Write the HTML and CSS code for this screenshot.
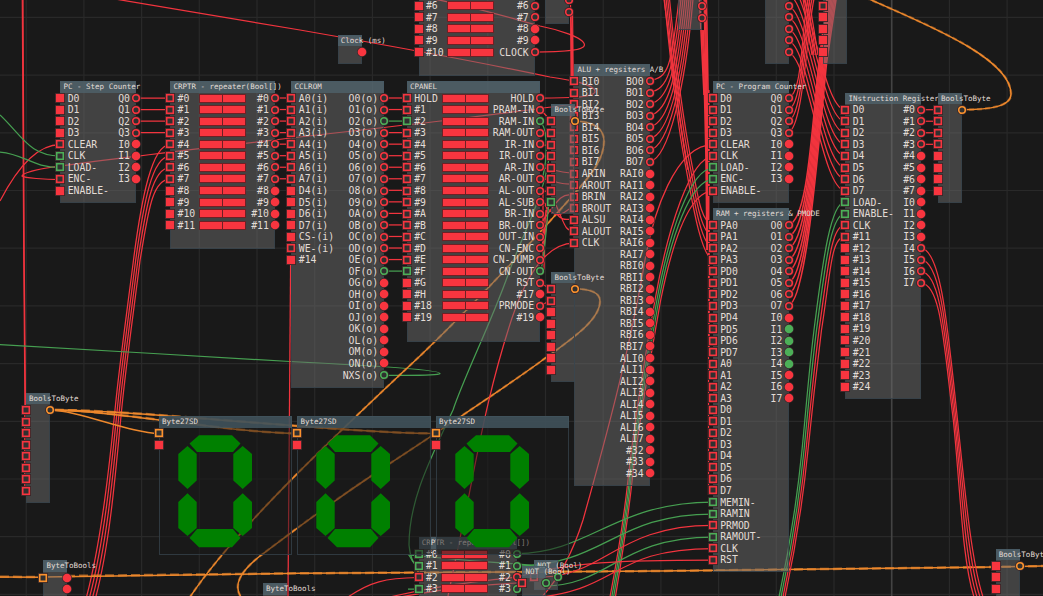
FILE: index.html
```html
<!DOCTYPE html>
<html lang="en">
<head>
<meta charset="utf-8">
<title>Node graph</title>
<link rel="stylesheet" href="styles.css">
</head>
<body>
<main class="canvas" id="canvas">
  <svg class="wires" id="wires" width="1043" height="596"></svg>
</main>
<script src="graph.js"></script>
</body>
</html>
```
FILE: styles.css
```css
*, *::before { box-sizing: border-box; }
body { margin: 0; background: #191919; }
.canvas {
  position: relative;
  width: 1043px;
  height: 596px;
  overflow: hidden;
  background: #191919;
  font-family: "DejaVu Sans Mono", monospace;
  color: #e2dcd6;
}
.wires { position: absolute; left: 0; top: 0; fill: none; }
.wires path { fill: none; stroke-width: 1.25; }
.grid { stroke: #292929; stroke-width: 1.2; }
.grid-major { stroke: #434343; stroke-width: 1.6; }
.wires .red { stroke: #f2343e; }
.wires .green { stroke: #469f51; }
.wires .orange { stroke: #ee882c; stroke-width: 1.5; }
.wires .pulse { stroke: #ee882c; stroke-width: 2.5; stroke-dasharray: 9 4; opacity: .65; }
.wires .glow { stroke: #ee882c; stroke-width: 2.6; stroke-dasharray: 5 3; opacity: .4; }
.wires .thin { stroke-width: .8; }
.wires .bold { stroke-width: 1.6; }
.node {
  position: absolute;
  background: rgba(107, 107, 107, .5);
  border: 1px solid rgba(52, 65, 74, .8);
}
.node-title {
  height: 11.5px;
  margin: -1px -1px 0;
  padding-left: 3.2px;
  font-size: 7.5px;
  line-height: 12.4px;
  white-space: nowrap;
  background: rgba(82, 105, 115, .65);
}
.row {
  display: flex;
  align-items: center;
  height: 11.54px;
  margin: 0 -6px;
  font-size: 9.8px;
  line-height: 11px;
  white-space: nowrap;
}
.label-in { margin-left: 2.4px; }
.label-out { margin-left: auto; margin-right: 1.3px; }
.port { flex: none; display: block; width: 10px; height: 10px; }
.port .rim { fill: #38282a; }
.port .mark { fill: var(--tone); }
.port .ring { fill: #303030; stroke: var(--tone); stroke-width: 1.6; }
.port.red { --tone: #f8353f; }
.port.green { --tone: #4caf58; }
.port.orange { --tone: #fb922d; }
.switch { display: flex; flex: none; width: 47px; height: 9px; border: 1px solid #6e2025; background: #6e2025; gap: 1px; }
.switch i { flex: 1; background: #f8353f; }
.display { background: rgba(25, 25, 25, .52); }
.display .node-title { background: rgba(68, 88, 98, .82); }
.segments { position: absolute; left: -1px; top: -1px; fill: #008000; }
```
FILE: graph.js
```
const canvas = document.getElementById('canvas');
const wires = document.getElementById('wires');
const STEP = 11.54;
const parts = [];

// Grid
for (let x = 891.7 - 15 * 57.7; x < 1043; x += 57.7)
  parts.push(`<line class="grid" x1="${x}" x2="${x}" y1="0" y2="596"/>`);
for (let y = 17.4; y < 596; y += 57.7)
  parts.push(`<line class="grid" x1="0" x2="1043" y1="${y}" y2="${y}"/>`);
parts.push('<line class="grid-major" x1="891.7" x2="891.7" y1="0" y2="596"/>');

const path = (cls, d) => parts.push(`<path class="${cls}" d="${d}"/>`);
const link = (cls, x1, y1, x2, y2) => {
  const k = Math.hypot(x2 - x1, y2 - y1) * 0.25;
  path(cls, `M${x1},${y1}C${x1 + k},${y1} ${x2 - k},${y2} ${x2},${y2}`);
};
const each = (n, fn) => { for (let i = 0; i < n; i++) fn(i, i * STEP); };

// Straight bus connections
each(4, (i, d) => link('red', 136, 98 + d, 170, 98 + d));
each(8, (i, d) => link('red', 275, 98 + d, 292, 98 + d));
each(16, (i, d) => link(i === 2 || i === 15 ? 'green' : 'red', 384, 98 + d, 407, 98 + d));
each(4, (i, d) => link('red', 921, 109.7 + d, 938, 109.7 + d));

// Left side
path('red', 'M22.3,0L23.8,260L25,410');
path('red', 'M23,0L24.2,260L25.5,410');
path('red', 'M24.8,410V491');
path('red', 'M60,144.5C38,144.5 18,166 0,201');
path('red', 'M60,179.5C45,179.5 24,178 22,176C23,172 45,168 60,166C160,152 390,127 450,120C510,112 540,109 573,104');
path('green', 'M0,115C23,137 30,156 60,156');
path('green', 'M0,152C25,154 32,167.5 60,167.5');
each(4, (i, d) => {
  const y = 144.5 + d, x = 133.5 + i * 2.2, b = 86.5 + i * 3.1;
  path('red', `M170,${y}C152,${y} ${x + 8},${198 + i * 5} ${x},260C${x - 7},315 ${x - 14},365 ${x - 18},405C${x - 24},465 ${b + 15},540 ${b},597`);
});
path('green', 'M384,375.3C410,375.3 438,376 440,373.5C440,369 340,364 290,361.5C200,356 90,350 0,344.5');
path('red', 'M290.6,262L288,596');
path('red', 'M540,98C565,98 592,98 595,92C595,84 570,80 550,77C470,60 380,44 300,30L115,-1');
path('red', 'M534,52C560,52 584,51 584.5,45C584,37 555,29 540,26C500,15 470,6 434,-1');

// Byte links
[159, 297.5, 436].forEach(x => link('orange', 49.5, 410, x, 433.4));
[297.5, 436].forEach(x => {
  const k = (x - 49.5) * 0.25;
  path('pulse', `M55,410C${50 + k},410 ${x - k},433.4 ${x},433.4`);
});
const loopA = 'M574,121.3C592,121 604,128 604,141C604,160 590,176 575,193C525,250 470,308 420,356C330,440 235,530 190,597';
const loopB = 'M574,288.8C592,289 600,293 600,301C600,320 573,338 540,362C500,391 430,437 380,470C320,510 288,535 260,556C240,572 233,585 241,597';
const loopC = 'M961,109.7C992,109.7 1011,106 1011,94C1011,58 925,24 869,-1';
[loopA, loopB, loopC].forEach(d => { path('glow', d); path('orange', d); });
path('orange', 'M0,577L43,577.3');
path('pulse', 'M0,576.8L43,577');
path('orange', 'M43,577L300,573.3L660,571L996,567L1043,566');
path('pulse', 'M66,576L300,573.3L660,571L996,567L1043,566');

// Control panel outputs
path('red', 'M541,110L551,121M541,133L551,133M541,145L551,145M541,156L551,156M541,168L551,168M541,179L551,179M541,191L551,191');
path('red', 'M540,202C553,198 546,240 540,248M543,190V260M545,215L544,270M546,210L543,245M540,283L551,289M540,306L551,300');
path('red', 'M540,225C560,195 565,192 574,196M545,205C560,225 565,208 574,207M556,213C563,222 566,219 574,219M556,205C565,225 565,231 574,231M551,169C560,172 565,173 574,173M551,180C560,184 565,184 574,184');
path('green', 'M540,121.5C546,125 549,150 543,176M549,202C546,230 545,250 541,271');
path('green', 'M549,158C543,200 520,240 508,275C490,325 465,375 453,410C430,460 409,500 409,545C410,555 413,565 418,566');
path('red', 'M574,243C545,243 525,280 512,318C490,385 480,440 468,500L448,596');
path('red', 'M571,10L572.5,85M570.5,5L571.2,85M572.5,10L573.3,85');
path('red thin', 'M574,80V243');
path('red', 'M713,144.5C675,144.5 653,215 645,260C630,350 604,445 583,520C572,555 558,580 540,599');

// ALU outputs
each(8, (i, d) => {
  const y = 80.8 + d, x = 679 + i * 2;
  path('red', `M650,${y}C668,${y - 4} ${x - 8},${70 + i * 3} ${x},-1`);
});
each(4, (i, d) => {
  const x = 669.5 - i * 1.7, m = 692 - i * 2.2;
  path('red', `M${x},-1C${x + 5},50 ${m - 10},115 ${m},165C${m + 5},190 700,${222 + d} 713,${225 + d}`);
});
path('red', 'M664,-1C672,60 680,130 688,170');
each(5, i => path('red bold', `M${702 + i * 1.1},${i < 2 ? 30 : -1}C${704 + i * .9},60 ${705 + i * .9},110 ${706 + i * .7},160L${707 + i * .4},${250}`));
path('red bold', 'M699.5,-1L704,95M708.8,90V190');
path('red', 'M708.5,250V495');
path('red thin', 'M709.5,230V350');
['red', 'green', 'green', 'red'].forEach((c, i) => {
  const y = 156.5 + i * STEP, x = 655 + i * 1.9, m = 628 + i * 1.4;
  path(c, `M713,${y}C690,${y} ${x + 12},${232 + i * 3} ${x},300C${x - 9},351 ${m + 6},425 ${m},480C${m - 5},526 ${617 + i * 1.5},560 ${610 + i * 1.8},597`);
});

// RAM and program counter outputs
each(4, (i, d) => path('red', `M788,${98 + d}C803,${95 + d} ${801 + i * 2},30 ${808 + i * 2},-1`));
each(8, (i, d) => path('red bold', `M788,${225 + d}C807,${222 + d} ${811 + i * 1.1},140 ${819 + i * 1.1},62L${827 + i * 1.3},-1`));
each(8, (i, d) => path('red', `M788,${-28 + d}C808,${-28 + d} 822,${109.7 + d} 845,${109.7 + d}`));
each(4, i => path('red', `M${803 + i * 2},-1L${812 + i * 2},55`));
['green', 'green', 'red', 'red'].forEach((c, i) => {
  const y = 202 + i * STEP, x = 814 + i * 2.5, m = 802 + i * 2;
  path(c, `M845,${y}C831,${y} ${x + 9},${258 + i * 5} ${x},330C${x - 5},370 ${m + 4},410 ${m},450C${m - 6},510 ${788 + i * 2},555 ${779 + i * 2},597`);
});
each(4, (i, d) => {
  const w = 957.5 - i * 1.4, b = 983 - i * 3;
  path('red', `M921,${248.2 + d}C941,${250 + d} ${w - 10},${325 + i * 5} ${w},420C${w + 7},487 ${b - 12},560 ${b},597`);
});

// RAM control inputs
path('green', 'M517,553.5C590,553 615,502 713,502');
path('green', 'M517,566C605,565 615,514 713,514');
path('red', 'M545,577C605,574 620,525 713,525.3');
path('green', 'M545,586C610,585 620,537 713,537');
path('red', 'M530,598C620,592 610,548.5 713,548.5');
path('red', 'M517,577C570,562 620,560 713,560');
path('red', 'M348,597C370,582 385,578 418,577.5');
path('green', 'M408,555L475,561L545,566M408,589H418M409,555L413,562');
path('red', 'M517,577C480,581 440,585 390,597M517,583C470,585 440,590 400,597');
wires.innerHTML = parts.join('');

/* Ports: lower case = open, upper case = filled; r red, g green, o orange. */
const tones = { r: 'red', g: 'green', o: 'orange' };
const port = (c, round) => {
  const open = c === c.toLowerCase();
  const shape = round
    ? `<circle class="rim" cx="5" cy="5" r="4.9"/>` + (open ? '<circle class="ring" cx="5" cy="5" r="3.3"/>' : '<circle class="mark" cx="5" cy="5" r="4.3"/>')
    : `<rect class="rim" width="10" height="10"/>` + (open ? '<rect class="ring" x="1.7" y="1.7" width="6.6" height="6.6"/>' : '<rect class="mark" x=".9" y=".9" width="8.2" height="8.2"/>');
  return `<svg class="port ${tones[c.toLowerCase()]}" viewBox="0 0 10 10">${shape}</svg>`;
};

const seq = (p, a, b) => Array.from({ length: b - a + 1 }, (_, i) => p + (a + i));

const SEGMENTS = `<svg class="segments" width="134" height="139">
<polygon points="30.5,27.5 40,19.3 73,19.3 81.5,27.5 74,36 38,36"/>
<polygon points="28.5,30 37.7,38 37.7,64.5 28.5,73 19.3,64.5 19.3,38"/>
<polygon points="83.7,30 93,38 93,64.5 83.7,73 74.3,64.5 74.3,38"/>
<polygon points="28.5,77.3 37.7,86 37.7,112 28.5,120 19.3,112 19.3,86"/>
<polygon points="83.7,77.3 93,86 93,112 83.7,120 74.3,112 74.3,86"/>
<polygon points="38,113 74,113 81.5,122 73,131.3 40,131.3 30.5,122"/>
</svg>`;

function node(n) {
  const el = document.createElement('section');
  el.className = 'node' + (n.display ? ' display' : '');
  el.style.cssText = `left:${n.x}px;top:${n.y}px;width:${n.w}px;height:${n.h}px`;
  let html = `<div class="node-title">${n.title || ''}</div>`;
  if (n.display) html += SEGMENTS;
  const rows = Math.max((n.ip || '').length, (n.op || '').length);
  for (let i = 0; i < rows; i++) {
    const a = n.ip && n.ip[i], b = n.op && n.op[i];
    html += '<div class="row">';
    if (a) html += port(a) + `<span class="label-in"${n.sw ? ` style="width:${n.sw - 7.9}px"` : ''}>${n.il ? n.il[i] : ''}</span>`;
    if (n.sw) html += '<span class="switch"><i></i><i></i></span>';
    if (b) html += `<span class="label-out">${n.ol ? n.ol[i] : ''}</span>` + port(b, true);
    html += '</div>';
  }
  el.innerHTML = html;
  canvas.appendChild(el);
}

const hex = [...'0123456789ABCDEFGHIJKLMN'];
const R = (c, n) => c.repeat(n);

node({ x: 545, y: -17.2, w: 24.3, h: 41.2, op: 'rr' });
node({ x: 418.5, y: -11.4, w: 116.5, h: 87, sw: 29.4, ip: 'RRRRR', op: 'rrRRr', il: seq('#', 6, 10), ol: [...seq('#', 6, 9), 'CLOCK'] });
node({ x: 678, y: -11.3, w: 24, h: 41, op: 'rr' });
node({ x: 764.5, y: -11.4, w: 24, h: 75.5, op: 'rrrrr' });
node({ x: 822.5, y: -11.4, w: 24, h: 75.5, ip: 'rRRRR' });
node({ title: 'Clock (ms)', x: 337.5, y: 34.7, w: 24, h: 29.5, op: 'R' });
node({ title: 'PC - Step Counter', x: 60.3, y: 81, w: 76, h: 121.7, ip: 'RRRRrggrR', op: 'rrrrRRRR',
  il: [...seq('D', 0, 3), 'CLEAR', 'CLK', 'LOAD-', 'ENC-', 'ENABLE-'], ol: [...seq('Q', 0, 3), ...seq('I', 0, 3)] });
node({ title: 'CRPTR - repeater(Bool[])', x: 170.2, y: 81, w: 105, h: 167.6, sw: 29.4, ip: 'rrrrrrrrRRRR', op: 'rrrrrrrrRRRR', il: seq('#', 0, 11), ol: seq('#', 0, 11) });
node({ title: 'CCLROM', x: 291.4, y: 81, w: 93, h: 306.5, ip: 'rrrrrrrrRRRRRrR', op: 'rrgrrrrrrrrrrrrgRRRRRRRRg',
  il: [...seq('A', 0, 7), ...seq('D', 4, 7)].map(s => s + '(i)').concat(['CS-(i)', 'WE-(i)', '#14']), ol: [...hex.map(c => `O${c}(o)`), 'NXS(o)'] });
node({ title: 'CPANEL', x: 406.8, y: 81, w: 133.6, h: 260.5, sw: 35.3, ip: 'rrgrrrrrrrrrrrrgRRRR', op: 'rrgrrrrrrrrrrrrgrRrR',
  il: ['HOLD', ...hex.slice(1, 18).map(c => '#' + c), '#18', '#19'],
  ol: ['HOLD', 'PRAM-IN', 'RAM-IN', 'RAM-OUT', 'IR-IN', 'IR-OUT', 'AR-IN', 'AR-OUT', 'AL-OUT', 'AL-SUB', 'BR-IN', 'BR-OUT', 'OUT-IN', 'CN-ENC', 'CN-JUMP', 'CN-OUT', 'RST', '#17', 'PRMODE', '#19'] });
node({ title: 'ALU + regsiters A/B', x: 574.3, y: 64, w: 75.6, h: 422, ip: R('r', 15), op: R('r', 8) + R('R', 27),
  il: [...seq('BI', 0, 7), 'ARIN', 'AROUT', 'BRIN', 'BROUT', 'ALSU', 'ALOUT', 'CLK'],
  ol: [...seq('BO', 0, 7), ...seq('RAI', 0, 7), ...seq('RBI', 0, 7), ...seq('ALI', 0, 7), '#32', '#33', '#34'] });
node({ title: 'BoolsToByte', x: 551.3, y: 104.2, w: 23.6, h: 109.6, ip: 'rrrrrrrg', op: 'o' });
node({ title: 'BoolsToByte', x: 551.3, y: 271.8, w: 23.6, h: 109.8, ip: 'rrRRRRRR', op: 'o' });
node({ title: 'PC - Program Counter', x: 712.8, y: 81, w: 75.8, h: 121.7, ip: 'rrrrrrggr', op: 'rrrrRRRR',
  il: [...seq('D', 0, 3), 'CLEAR', 'CLK', 'LOAD-', 'ENC-', 'ENABLE-'], ol: [...seq('Q', 0, 3), ...seq('I', 0, 3)] });
node({ title: 'RAM + registers &amp; PMODE', x: 712.8, y: 208, w: 75.8, h: 363.5, ip: R('r', 24) + 'ggrgrr', op: R('r', 8) + 'RGGGGRRR',
  il: [...seq('PA', 0, 3), ...seq('PD', 0, 7), ...seq('A', 0, 3), ...seq('D', 0, 7), 'MEMIN-', 'RAMIN', 'PRMOD', 'RAMOUT-', 'CLK', 'RST'],
  ol: [...seq('O', 0, 7), ...seq('I', 0, 7)] });
node({ title: 'INstruction Register', x: 845.3, y: 92.6, w: 76, h: 306, ip: R('r', 8) + 'ggrr' + R('R', 13), op: 'rrrrRRRRRRRRrrrr',
  il: [...seq('D', 0, 7), 'LOAD-', 'ENABLE-', 'CLK', ...seq('#', 11, 24)], ol: [...seq('#', 0, 7), ...seq('I', 0, 7)] });
node({ title: 'BoolsToByte', x: 937.7, y: 92.6, w: 24, h: 110, ip: 'rrrrRRRR', op: 'o' });
node({ title: 'BoolsToByte', x: 25.7, y: 392.8, w: 24, h: 110, ip: R('r', 8), op: 'o' });
node({ title: 'CRPTR - repeater(Bool[])', x: 418.5, y: 537, w: 98.6, h: 100, sw: 23, ip: 'ggrg', op: 'ggrg', il: seq('#', 0, 3), ol: seq('#', 0, 3) });
[158.7, 297.2, 435.7].forEach(x => node({ title: 'Byte27SD', display: true, x, y: 416, w: 133.4, h: 138.5, ip: 'oR' }));
node({ title: 'NOT (Bool)', x: 534, y: 560, w: 24, h: 30, ip: 'r', op: 'g' });
node({ title: 'NOT (Bool)', x: 522.3, y: 566, w: 24, h: 30, ip: 'r', op: 'g' });
node({ title: 'ByteToBools', x: 43.2, y: 560.3, w: 23.7, h: 60, ip: 'o', op: 'RR' });
node({ title: 'ByteToBools', x: 262.7, y: 583.3, w: 24, h: 60 });
node({ title: 'BoolsToByte', x: 995.6, y: 548.7, w: 24, h: 80, ip: 'RRR', op: 'o' });
```
